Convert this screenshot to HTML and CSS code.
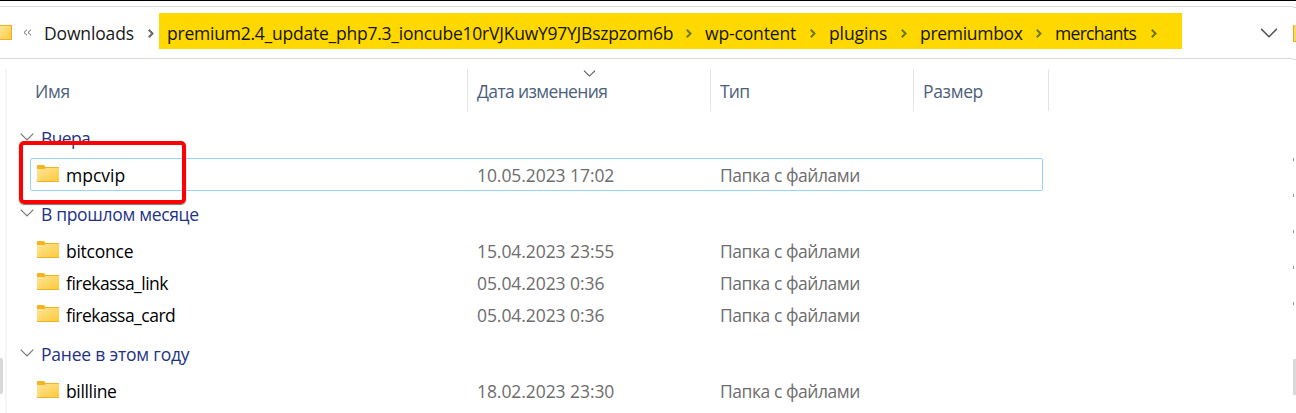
FILE: index.html
```
<!DOCTYPE html>
<html lang="ru">
<head>
<meta charset="utf-8">
<title>merchants</title>
<link rel="stylesheet" href="styles.css">
</head>
<body>
<svg width="0" height="0" class="defs">
  <defs>
    <linearGradient id="fold" x1="0" y1="0" x2="1" y2="1"><stop offset="0" stop-color="#ffe69b"/><stop offset="1" stop-color="#ffc937"/></linearGradient>
    <symbol id="folder" viewBox="0 0 22 17"><path d="M0 1Q0 0 1 0H7L8.500 2H22V8H0Z" fill="#f3b51d"/><path d="M0 4H7.500L9 3H22V16.500H0Z" fill="url(#fold)"/><path d="M0 16.500H22" stroke="#eeb02a"/></symbol>
    <symbol id="down" viewBox="0 0 14 8"><path d="M.7.7L7 7L13.300.7" fill="none" stroke="currentColor" stroke-width="1.200"/></symbol>
    <symbol id="next" viewBox="0 0 6 9"><path d="M.8.8L4.500 4.500L.8 8.200" fill="none" stroke="currentColor" stroke-width="2"/></symbol>
  </defs>
</svg>
<div class="window">
  <div class="main">
    <div class="address">
      <svg class="cut-folder" viewBox="0 0 12 15"><path d="M0 0H12V15H0Z" fill="url(#fold)"/><path d="M0 .5H12M0 14.500H12M11.500 0V15" stroke="#eeb02a"/></svg>
      <svg class="back" viewBox="0 0 9 7"><path d="M4 .7L1 3.500L4 6.300M8 .7L5 3.500L8 6.300" fill="none" stroke="#666"/></svg>
      <span class="crumb c-down">Downloads</span><svg class="next"><use href="#next"/></svg>
      <div class="marked">
        <span class="crumb c-prem">premium2.4_update_php7.3_ioncube10rVJKuwY97YJBszpzom6b</span><svg class="next"><use href="#next"/></svg>
        <span class="crumb c-wp">wp-content</span><svg class="next"><use href="#next"/></svg>
        <span class="crumb c-plug">plugins</span><svg class="next"><use href="#next"/></svg>
        <span class="crumb c-box">premiumbox</span><svg class="next"><use href="#next"/></svg>
        <span class="crumb c-mer">merchants</span><svg class="next"><use href="#next"/></svg>
      </div>
      <svg class="drop"><use href="#down"/></svg>
    </div>
    <div class="content">
      <div class="rail"><div class="thumb"></div></div>
      <div class="list">
        <div class="head">
          <div class="h-name">Имя</div>
          <div class="h-date"><svg class="sort"><use href="#down"/></svg>Дата изменения</div>
          <div class="h-type">Тип</div>
          <div class="h-size">Размер</div>
        </div>
        <div class="group"><svg class="toggle"><use href="#down"/></svg><span class="g1">Вчера</span></div>
        <div class="row selected"><svg class="folder"><use href="#folder"/></svg><div class="name">mpcvip</div><div class="date">10.05.2023 17:02</div><div class="type">Папка с файлами</div><div class="callout"></div></div>
        <div class="group"><svg class="toggle"><use href="#down"/></svg><span class="g2">В прошлом месяце</span></div>
        <div class="row"><svg class="folder"><use href="#folder"/></svg><div class="name n2">bitconce</div><div class="date">15.04.2023 23:55</div><div class="type">Папка с файлами</div></div>
        <div class="row"><svg class="folder"><use href="#folder"/></svg><div class="name n3">firekassa_link</div><div class="date">05.04.2023 0:36</div><div class="type">Папка с файлами</div></div>
        <div class="row"><svg class="folder"><use href="#folder"/></svg><div class="name n3">firekassa_card</div><div class="date">05.04.2023 0:36</div><div class="type">Папка с файлами</div></div>
        <div class="group"><svg class="toggle"><use href="#down"/></svg><span class="g3">Ранее в этом году</span></div>
        <div class="row"><svg class="folder"><use href="#folder"/></svg><div class="name n5">billline</div><div class="date">18.02.2023 23:30</div><div class="type">Папка с файлами</div></div>
      </div>
    </div>
  </div>
  <div class="edge">
    <div class="edge-top"><div class="edge-folder"></div></div>
    <div class="pins"><i></i><i></i><i></i><i></i><i></i></div>
    <div class="edge-thumb"></div>
  </div>
</div>
</body>
</html>
```
FILE: styles.css
```
* { box-sizing: border-box; }
body { margin: 0; background: #fff; overflow: hidden; font: 17.5px/24px "Open Sans", "Noto Sans", sans-serif; color: #000; }
svg { display: block; flex: none; }
.defs { position: absolute; }
.window { display: flex; height: 413px; border-top: 1px solid #000; }
.main { width: 1293px; padding-top: 5px; }
.address { display: flex; align-items: center; height: 53px; border-top: 1px solid #d9d9d9; border-bottom: 1px solid #d9d9d9; color: #191919; }
.cut-folder { width: 12px; height: 15px; }
.back { width: 9px; height: 7px; margin: 0 12px 0 11px; }
.crumb { display: block; flex: none; white-space: nowrap; }
.next { width: 6px; height: 9px; margin-top: 2px; color: #666; }
.c-down { width: 104px; letter-spacing: -0.15px; }
.marked { display: flex; align-items: center; width: 1023px; height: 36px; margin: -3px 0 0 5px; padding: 3px 0 0 8px; background: #ffd800; flex: none; }
.marked .next { margin-right: 13px; color: #6b7800; }
.marked .crumb { color: #161500; }
.c-prem { width: 519px; letter-spacing: -0.23px; }
.c-wp { width: 105px; letter-spacing: -0.15px; }
.c-plug { width: 72px; letter-spacing: -0.1px; }
.c-box { width: 116px; letter-spacing: -0.3px; }
.c-mer { width: 96px; letter-spacing: -0.7px; }
.drop { width: 18px; height: 10px; margin-left: 78px; color: #555; }
.content { display: flex; }
.rail { width: 7px; height: 344px; margin-top: 10px; padding-top: 289px; border-right: 2px solid #f5f5f5; }
.thumb { width: 3px; height: 36px; background: #d9d9d9; border-radius: 0 2px 2px 0; }
.list { width: 1286px; padding-top: 10px; }
.head { display: flex; height: 42px; margin-bottom: 3px; color: #4c607a; line-height: 44px; white-space: nowrap; }
.head > div { border-right: 1px solid #e4e4e4; padding-left: 9px; position: relative; }
.head .h-name { width: 461px; padding-left: 28px; letter-spacing: -0.3px; }
.h-date { width: 243px; letter-spacing: -0.64px; }
.h-type { width: 203px; letter-spacing: -0.8px; }
.h-size { width: 135px; letter-spacing: -0.35px; }
.sort { position: absolute; left: 115px; top: 1px; width: 13px; height: 7px; color: #555; }
.group { display: flex; align-items: center; height: 44px; padding: 4px 0 0 13px; color: #1e3287; }
.g1 { letter-spacing: -0.6px; }
.g2 { letter-spacing: -0.33px; }
.g3 { letter-spacing: -0.2px; }
.toggle { width: 14px; height: 8px; margin: -3px 7px 0 0; color: #777; }
.row { display: flex; align-items: center; position: relative; width: 1013px; height: 32px; margin-left: 23px; padding: 1px 0 0 7px; white-space: nowrap; }
.selected { height: 33px; margin-bottom: -1px; padding: 0 0 0 6px; border: 1px solid #99d1ff; border-radius: 2px; }
.folder { width: 22px; height: 17px; margin: -2px 7px 0 0; }
.name { width: 411px; }
.n2 { letter-spacing: -0.25px; }
.n3 { letter-spacing: -0.5px; }
.n5 { letter-spacing: -0.35px; }
.date { width: 243px; color: #6d6d6d; letter-spacing: -0.07px; }
.type { color: #6d6d6d; letter-spacing: -0.45px; }
.callout { position: absolute; left: -12px; top: -18px; width: 167px; height: 63px; border: 4px solid #fe0000; border-radius: 5px; box-shadow: 0 1px 1px #777; }
.edge { width: 3px; padding-top: 6px; }
.edge-top { height: 53px; border: solid #d9d9d9; border-width: 1px 0; padding-top: 17px; }
.edge-folder { height: 17px; background: #ffd469; border-bottom: 1px solid #e9a820; border-left: 1px solid #e9a820; }
.pins { height: 239px; padding-top: 98px; display: flex; flex-direction: column; gap: 33px; }
.pins i { width: 1px; height: 3px; background: #999; flex: none; }
.edge-thumb { height: 36px; margin-top: 60px; background: #d9d9d9; }
```
